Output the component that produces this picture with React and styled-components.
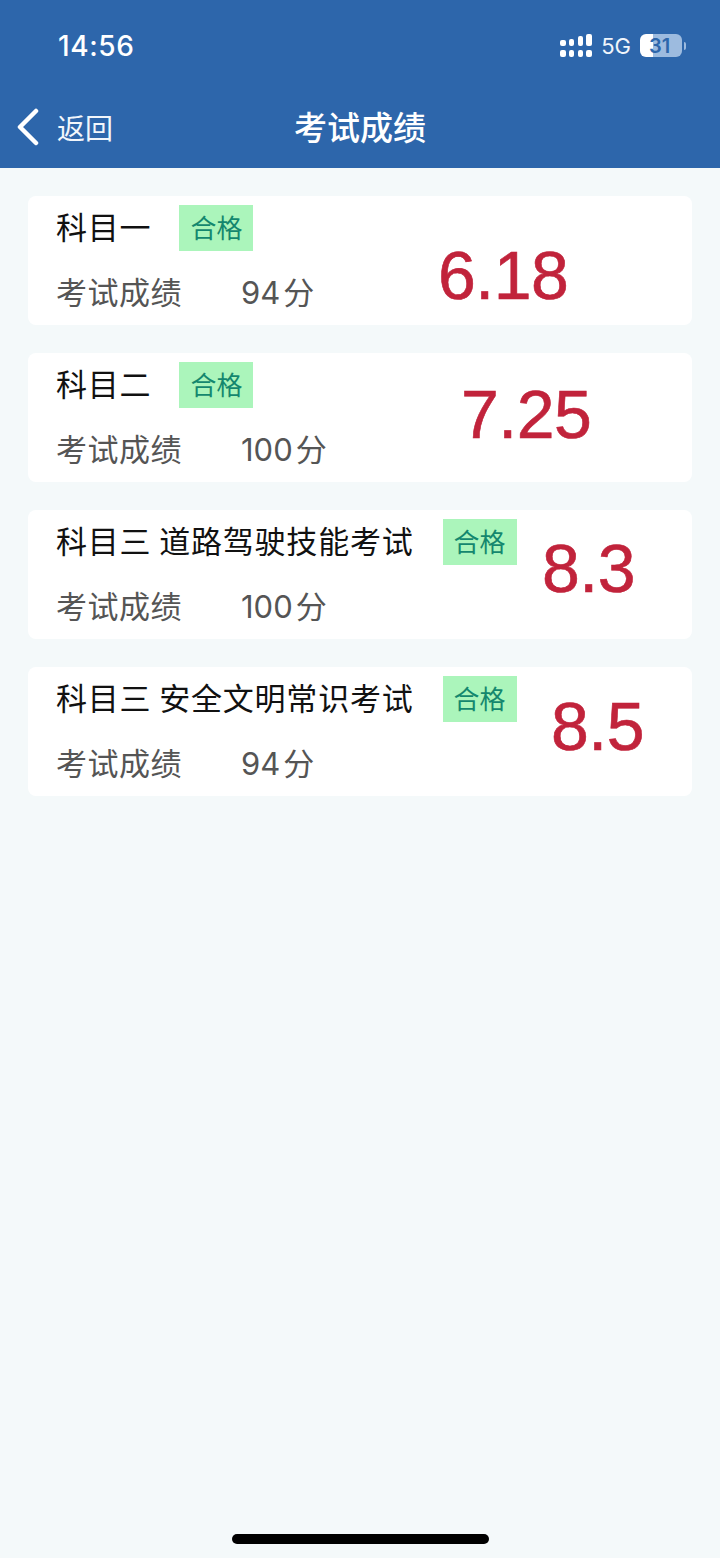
import React from "react";
import styled, { createGlobalStyle } from "styled-components";

const GlobalStyle = createGlobalStyle`
  html, body {
    margin: 0;
    padding: 0;
    background: #f4f9fa;
  }
  body {
    font-family: "Liberation Sans", "Noto Sans CJK SC", sans-serif;
  }
`;

const Page = styled.div`
  position: relative;
  width: 720px;
  height: 1558px;
  overflow: hidden;
  display: flex;
  flex-direction: column;
  background: #f4f9fa;
`;

const Header = styled.header`
  height: 168px;
  flex-shrink: 0;
  background: #2d66ab;
  color: #fff;
  display: flex;
  flex-direction: column;
`;

const StatusBar = styled.div`
  height: 91px;
  box-sizing: border-box;
  padding: 0 34px 0 58px;
  display: flex;
  align-items: center;
  justify-content: space-between;
`;

const Clock = styled.span`
  font-family: Inter, "Liberation Sans", sans-serif;
  font-size: 28px;
  font-weight: 500;
  letter-spacing: 0.6px;
`;

const StatusIcons = styled.div`
  display: flex;
  align-items: center;
`;

const Network = styled.span`
  font-family: Inter, "Liberation Sans", sans-serif;
  font-size: 22px;
  margin-left: 9px;
  margin-right: 9px;
  color: #f0f5fb;
`;

const Battery = styled.div`
  position: relative;
  width: 42px;
  height: 23px;
  border-radius: 6px;
  overflow: hidden;
  background: linear-gradient(to right, #fff 0 31%, #9dbbdf 31% 100%);
`;

const BatteryLevel = styled.span`
  position: absolute;
  inset: 0;
  padding-right: 3px;
  display: flex;
  align-items: center;
  justify-content: center;
  font-family: Inter, "Liberation Sans", sans-serif;
  font-size: 20px;
  font-weight: 600;
  color: #2d66ab;
`;

const BatteryCap = styled.div`
  width: 2px;
  height: 8px;
  margin-left: 2px;
  border-radius: 0 2px 2px 0;
  background: #9dbbdf;
`;

const NavBar = styled.div`
  position: relative;
  height: 77px;
  display: flex;
  align-items: center;
  justify-content: center;
`;

const BackLink = styled.div`
  position: absolute;
  left: 16px;
  top: 17px;
  display: flex;
  align-items: center;
  gap: 17px;
  font-size: 28px;
  color: #f2f6fb;
`;

const BackText = styled.span`
  font-family: "Noto Sans CJK SC", sans-serif;
  font-weight: 400;
  line-height: 38px;
`;

const Title = styled.h1`
  margin: 0;
  font-size: 33px;
  font-weight: 500;
  font-family: "Noto Sans CJK SC", sans-serif;
  line-height: 1;
  position: relative;
  top: -3px;
`;

const List = styled.main`
  display: flex;
  flex-direction: column;
  gap: 28px;
  padding: 28px 28px 0;
`;

const Card = styled.section`
  position: relative;
  height: 129px;
  box-sizing: border-box;
  padding: 9px 28px 0;
  background: #fff;
  border-radius: 8px;
`;

const TopRow = styled.div`
  display: flex;
  align-items: center;
  height: 46px;
`;

const Name = styled.span`
  font-family: "Noto Sans CJK SC", sans-serif;
  font-size: 31px;
  line-height: 42px;
  margin-bottom: 4px;
  color: #111;
  letter-spacing: 0.8px;
  white-space: pre;
`;

const Badge = styled.span`
  width: 74px;
  height: 46px;
  padding-bottom: 3px;
  box-sizing: border-box;
  margin-left: ${(p) => p.$gap}px;
  display: flex;
  align-items: center;
  justify-content: center;
  background: #abf5bb;
  color: #14876e;
  font-family: "Noto Sans CJK SC", sans-serif;
  font-size: 26px;
`;

const ScoreRow = styled.div`
  display: flex;
  align-items: center;
  height: 44px;
  margin-top: 17px;
  color: #555;
  font-size: 31px;
  font-family: "Noto Sans CJK SC", sans-serif;
`;

const ScoreLabel = styled.span`
  width: 185px;
  letter-spacing: 0.5px;
`;

const ScoreValue = styled.span`
  display: flex;
  align-items: baseline;
  gap: 3px;
`;

const ScoreNumber = styled.span`
  font-family: Inter, "Liberation Sans", sans-serif;
  font-size: 31px;
`;

const DateMark = styled.span`
  position: absolute;
  left: ${(p) => p.$x}px;
  top: ${(p) => p.$y}px;
  font-family: "Liberation Sans", Arial, sans-serif;
  font-size: 68px;
  line-height: 1;
  letter-spacing: -0.5px;
  color: #c1233b;
  -webkit-text-stroke: 0.6px #c1233b;
`;

const HomeBar = styled.div`
  position: absolute;
  left: 232px;
  top: 1534px;
  width: 257px;
  height: 10px;
  border-radius: 5px;
  background: #000;
`;

const results = [
  { name: "科目一", gap: 28, score: "94", mark: "6.18", x: 410, y: 45 },
  { name: "科目二", gap: 28, score: "100", mark: "7.25", x: 433, y: 27 },
  { name: "科目三 道路驾驶技能考试", gap: 29, score: "100", mark: "8.3", x: 514, y: 24 },
  { name: "科目三 安全文明常识考试", gap: 29, score: "94", mark: "8.5", x: 523, y: 25 },
];

function SignalIcon() {
  return (
    <svg width="32" height="24" viewBox="0 0 32 24" fill="#fff">
      <rect x="0" y="6" width="6" height="6" rx="2" />
      <rect x="9" y="5" width="5" height="7" rx="2" />
      <rect x="18" y="2" width="5" height="10" rx="2" />
      <rect x="26" y="0" width="6" height="12" rx="2" />
      <rect x="0" y="16" width="6" height="7" rx="2" />
      <rect x="9" y="16" width="5" height="7" rx="2" />
      <rect x="18" y="16" width="5" height="7" rx="2" />
      <rect x="26" y="16" width="6" height="7" rx="2" />
    </svg>
  );
}

function BackIcon() {
  return (
    <svg width="24" height="38" viewBox="0 0 24 38" fill="none">
      <path d="M20 3 L4 19 L20 35" stroke="#fff" strokeWidth="4.5" strokeLinecap="round" strokeLinejoin="round" />
    </svg>
  );
}

export default function App() {
  return (
    <Page>
      <GlobalStyle />
      <Header>
        <StatusBar>
          <Clock>14:56</Clock>
          <StatusIcons>
            <SignalIcon />
            <Network>5G</Network>
            <Battery>
              <BatteryLevel>31</BatteryLevel>
            </Battery>
            <BatteryCap />
          </StatusIcons>
        </StatusBar>
        <NavBar>
          <BackLink>
            <BackIcon />
            <BackText>返回</BackText>
          </BackLink>
          <Title>考试成绩</Title>
        </NavBar>
      </Header>
      <List>
        {results.map((r) => (
          <Card key={r.name}>
            <TopRow>
              <Name>{r.name}</Name>
              <Badge $gap={r.gap}>合格</Badge>
            </TopRow>
            <ScoreRow>
              <ScoreLabel>考试成绩</ScoreLabel>
              <ScoreValue>
                <ScoreNumber>{r.score}</ScoreNumber>
                <span>分</span>
              </ScoreValue>
            </ScoreRow>
            <DateMark $x={r.x} $y={r.y}>{r.mark}</DateMark>
          </Card>
        ))}
      </List>
      <HomeBar />
    </Page>
  );
}
